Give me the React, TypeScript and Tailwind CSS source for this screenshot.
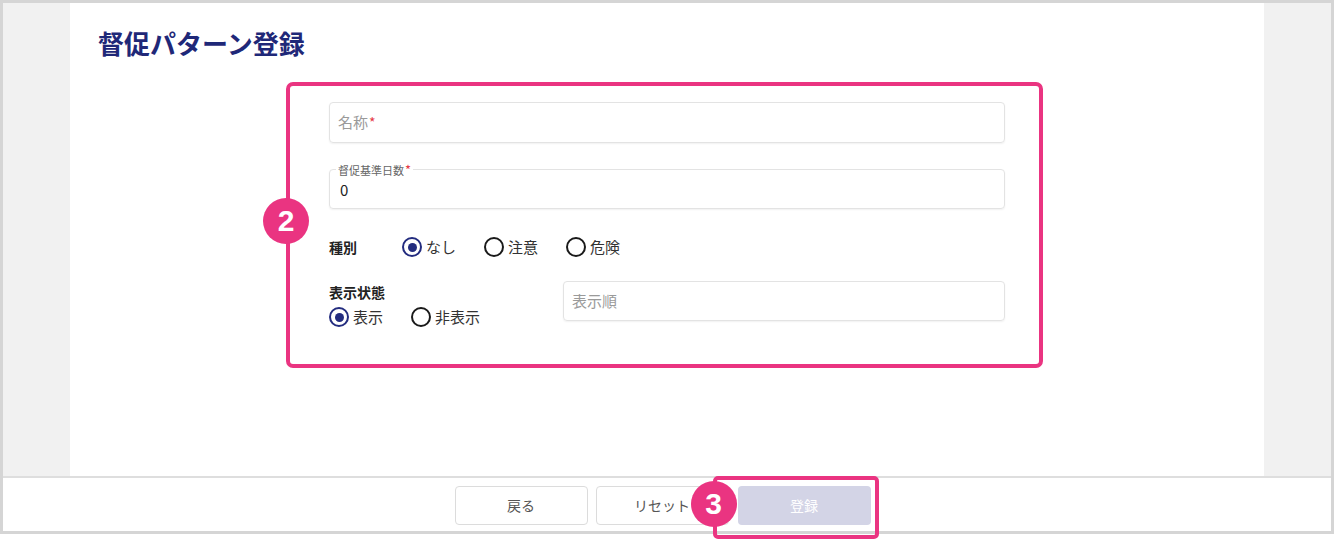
import React from 'react';

const font = "font-['Noto_Sans_CJK_JP','Noto_Sans',sans-serif]";

function Radio({ label, checked }: { label: string; checked?: boolean }) {
  return (
    <label className="flex w-[82px] items-center gap-[4px]">
      <span
        className={`flex h-[20px] w-[20px] items-center justify-center rounded-full border-2 ${
          checked ? 'border-[#232c7f]' : 'border-[#1a1a1a]'
        }`}
      >
        {checked && <span className="h-[9px] w-[9px] rounded-full bg-[#232c7f]" />}
      </span>
      <span className="text-[15px] leading-[20px] text-[#333]">{label}</span>
    </label>
  );
}

function Badge({ n, className }: { n: string; className: string }) {
  return (
    <div
      className={`absolute flex h-[46px] w-[46px] items-center justify-center rounded-full bg-[#ea3481] font-['Liberation_Sans',sans-serif] text-[30px] font-bold leading-none text-white ${className}`}
    >
      {n}
    </div>
  );
}

export default function App() {
  return (
    <div className={`h-[541px] w-[1334px] bg-white ${font}`}>
      <div className="flex h-[534px] flex-col border-[3px] border-[#d5d5d5]">
        {/* Main area */}
        <div className="flex h-[473px] bg-[#f1f1f1]">
          <div className="w-[67px]" />
          <main className="w-[1194px] bg-white pt-[22px]">
            <h1 className="pl-[28px] text-[26px] font-bold leading-[36px] text-[#1f2878]">
              督促パターン登録
            </h1>

            {/* Form (annotation 2) */}
            <div className="relative ml-[216px] mt-[21px] h-[286px] w-[757px] rounded-[7px] border-4 border-[#ea3481] pl-[39px] pt-[16px]">
              <Badge n="2" className="left-[-27px] top-[112px]" />

              <div className="flex h-[41px] w-[676px] items-center rounded-[4px] border border-[#e3e3e3] px-[8px] shadow-[0_1px_2px_rgba(0,0,0,0.06)]">
                <span className="text-[15px] text-[#9a9a9a]">名称</span>
                <span className="ml-[1px] text-[14px] text-[#e53946]">*</span>
              </div>

              <div className="relative mt-[26px] flex h-[40px] w-[676px] items-end rounded-[4px] border border-[#e3e3e3] px-[10px] pb-[9px] shadow-[0_1px_2px_rgba(0,0,0,0.06)]">
                <span className="absolute left-[6px] top-[-7px] flex items-center bg-white px-[2px] text-[11px] leading-[14px] text-[#666]">
                  督促基準日数<span className="ml-[1px] text-[13px] text-[#e53946]">*</span>
                </span>
                <span className="text-[15px] leading-[18px] text-[#222]">0</span>
              </div>

              <div className="mt-[28px] flex h-[20px] items-center">
                <span className="w-[73px] text-[14px] font-bold text-[#222]">種別</span>
                <Radio label="なし" checked />
                <Radio label="注意" />
                <Radio label="危険" />
              </div>

              <div className="mt-[24px] flex">
                <div className="w-[234px] pt-[1px]">
                  <div className="text-[14px] font-bold leading-[20px] text-[#222]">表示状態</div>
                  <div className="mt-[5px] flex h-[20px] items-center">
                    <Radio label="表示" checked />
                    <Radio label="非表示" />
                  </div>
                </div>
                <div className="flex h-[40px] w-[442px] items-center rounded-[4px] border border-[#e3e3e3] px-[8px] shadow-[0_1px_2px_rgba(0,0,0,0.06)]">
                  <span className="text-[15px] text-[#9a9a9a]">表示順</span>
                </div>
              </div>
            </div>
          </main>
          <div className="w-[67px]" />
        </div>

        {/* Footer */}
        <footer className="flex h-[55px] justify-center gap-[8px] border-t-2 border-[#dedede] bg-white pr-[9px] pt-[8px]">
          <button className="h-[39px] w-[133px] rounded-[4px] border border-[#dcdcdc] bg-white text-[14px] text-[#555]">
            戻る
          </button>
          <button className="h-[39px] w-[133px] rounded-[4px] border border-[#dcdcdc] bg-white text-[14px] text-[#555]">
            リセット
          </button>
          <div className="relative ml-[1px]">
            <button className="h-[39px] w-[133px] rounded-[4px] bg-[#d3d4e6] text-[14px] text-white">
              登録
            </button>
            <div className="pointer-events-none absolute bottom-[-8px] left-[-25px] right-[-8px] top-[-10px] rounded-[5px] border-4 border-[#ea3481]" />
            <Badge n="3" className="left-[-47px] top-[-5px]" />
          </div>
        </footer>
      </div>
    </div>
  );
}
